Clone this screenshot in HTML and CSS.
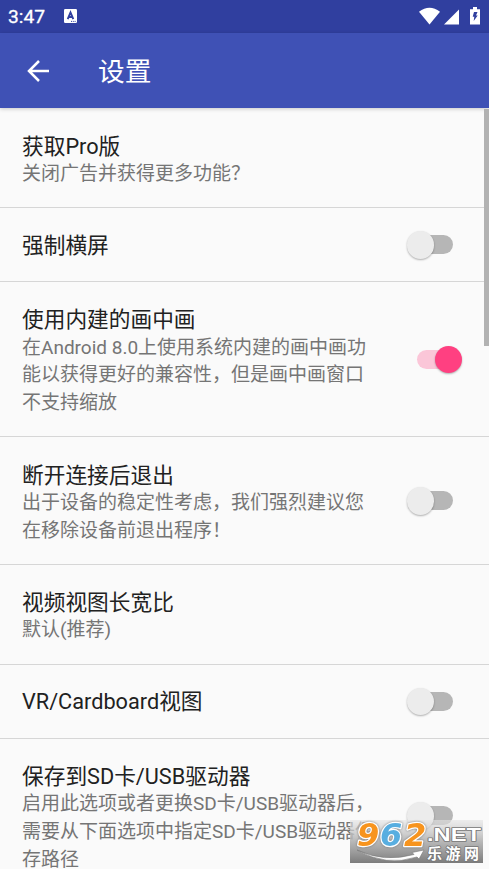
FILE: index.html
```
<!DOCTYPE html>
<html lang="zh-CN">
<head>
<meta charset="utf-8">
<title>设置</title>
<link rel="stylesheet" href="styles.css">
</head>
<body>
<div class="screen">
  <header class="status">
    <span class="clock">3:47</span>
    <svg class="note" viewBox="0 0 13 14"><rect width="13" height="14" rx="1.2" fill="#fff"/><path d="M3.700 10.200 6.500 3.400 9.300 10.200M4.700 8h3.600" fill="none" stroke="#303f9f" stroke-width="1.900"/><path d="M7 12.400h5" stroke="#303f9f" stroke-dasharray="1 .8"/></svg>
    <svg class="signals" viewBox="0 0 62 18"><path d="M0 4.700Q10.500-3 21 4.700L10.500 17.500Z"/><path d="M25 17.500 40 2.500V17.500Z"/><path d="M51 2.200H54V0h4v2.200h3V17.500H51Z"/><path d="M55 5h3.500l-1.500 3.500h1.700L54.700 14l.6-4.200h-1.600Z" fill="#303f9f"/></svg>
  </header>
  <div class="appbar">
    <svg class="back" viewBox="0 0 22 22"><path d="M12 1 2 11 12 21M2 11H22" fill="none" stroke="#fff" stroke-width="2.500"/></svg>
    <h1>设置</h1>
  </div>
  <main class="list">
    <section class="row"><div class="text"><h2>获取Pro版</h2><p>关闭广告并获得更多功能？</p></div></section>
    <section class="row single"><div class="text"><h2>强制横屏</h2></div><i class="switch"></i></section>
    <section class="row"><div class="text"><h2>使用内建的画中画</h2><p>在Android 8.0上使用系统内建的画中画功<br>能以获得更好的兼容性，但是画中画窗口<br>不支持缩放</p></div><i class="switch on"></i></section>
    <section class="row"><div class="text"><h2>断开连接后退出</h2><p>出于设备的稳定性考虑，我们强烈建议您<br>在移除设备前退出程序！</p></div><i class="switch"></i></section>
    <section class="row"><div class="text"><h2>视频视图长宽比</h2><p>默认(推荐)</p></div></section>
    <section class="row single"><div class="text"><h2>VR/Cardboard视图</h2></div><i class="switch"></i></section>
    <section class="row"><div class="text"><h2>保存到SD卡/USB驱动器</h2><p>启用此选项或者更换SD卡/USB驱动器后，<br>需要从下面选项中指定SD卡/USB驱动器保<br>存路径</p></div><i class="switch"></i></section>
  </main>
  <div class="scrollbar"></div>
  <svg class="watermark" viewBox="0 0 133 43">
    <defs>
      <linearGradient id="shade" x2="0" y2="1"><stop stop-color="#e4e4e4" stop-opacity=".6"/><stop offset=".5" stop-color="#b0b0b0" stop-opacity=".9"/><stop offset="1" stop-color="#7c7c7c"/></linearGradient>
    </defs>
    <rect width="133" height="43" fill="url(#shade)"/>
    <path d="M7 30Q34 43 64 34.500L62 32.500 74 30 69 39 67 37Q36 47 7 30Z" fill="#fff" stroke="#777" stroke-width=".6"/>
    <g class="digits"><text x="7" y="26">9</text><text class="blue" x="30" y="26">6</text><text x="54" y="26">2</text></g>
    <text class="net" x="77" y="20.500" textLength="54" lengthAdjust="spacingAndGlyphs">.NET</text>
    <text class="site" x="77" y="38.500" textLength="52" lengthAdjust="spacing">乐游网</text>
  </svg>
</div>
</body>
</html>
```
FILE: styles.css
```
* { box-sizing: border-box; }
body { margin: 0; background: #fafafa; }
.screen {
  position: relative;
  height: 869px;
  overflow: hidden;
  font-family: Roboto, "Noto Sans CJK SC", sans-serif;
}
.status {
  display: flex;
  align-items: center;
  height: 32.5px;
  padding: 0 8px 0 8px;
  background: #303f9f;
  color: #fff;
}
.clock { font-size: 19.2px; font-weight: 400; line-height: 32px; width: 56px; padding-top: 2px; -webkit-text-stroke: .3px #fff; }
.note { width: 13px; height: 14px; }
.signals { width: 62px; height: 18px; margin-left: auto; fill: #fff; }
.appbar {
  position: relative;
  display: flex;
  align-items: center;
  height: 75.9px;
  padding-left: 26.5px;
  background: #3f51b5;
  box-shadow: 0 1px 4px rgba(0, 0, 0, .2);
}
.back { width: 22px; height: 22px; margin-top: 1px; }
h1 { margin: 3px 0 0 49.5px; color: #fff; font-size: 26.7px; line-height: 40px; font-weight: 400; }
.row {
  display: flex;
  align-items: center;
  min-height: 74px;
  padding: 24.3px 26px 19.3px 22px;
  border-bottom: 1px solid #d6d6d6;
}
.single { padding-top: 22.6px; padding-bottom: 20.4px; }
.text { flex: 1; white-space: nowrap; }
h2 { margin: 0; color: #212121; font-size: 21.7px; line-height: 27.3px; font-weight: 400; }
p { margin: 0; color: #757575; font-size: 19px; line-height: 27.8px; }
.switch {
  position: relative;
  width: 36px;
  height: 19px;
  margin: 0 10.5px 4.5px 0;
  border-radius: 10px;
  background: #b6b6b6;
}
.single .switch { margin-bottom: 2px; }
.switch::after {
  content: "";
  position: absolute;
  top: -4px;
  left: -10px;
  width: 27.5px;
  height: 27.5px;
  border-radius: 50%;
  background: #ececec;
  box-shadow: 0 1px 2px rgba(0, 0, 0, .3);
}
.switch.on { background: #fbc6d8; }
.switch.on::after { left: 18px; background: #ff4081; }
.scrollbar { position: absolute; top: 109px; right: 0; width: 5px; height: 237px; background: #b2b2b2; }
.watermark { position: absolute; left: 350px; top: 820px; width: 133px; height: 43px; overflow: visible; }
.watermark text { paint-order: stroke; stroke-linejoin: round; }
.digits { font: italic 700 32px "DejaVu Sans", sans-serif; fill: #f7941e; stroke: #fff; stroke-width: 2.5px; filter: drop-shadow(0 0 1px #777); }
.digits .blue { fill: #58aee0; }
.net { font: 700 18.5px "Liberation Sans", sans-serif; fill: #fff; stroke: #777; stroke-width: 1.6px; }
.site { font: 700 15px "Noto Sans CJK SC", sans-serif; fill: #fff; stroke: #777; stroke-width: 1.6px; }
```
